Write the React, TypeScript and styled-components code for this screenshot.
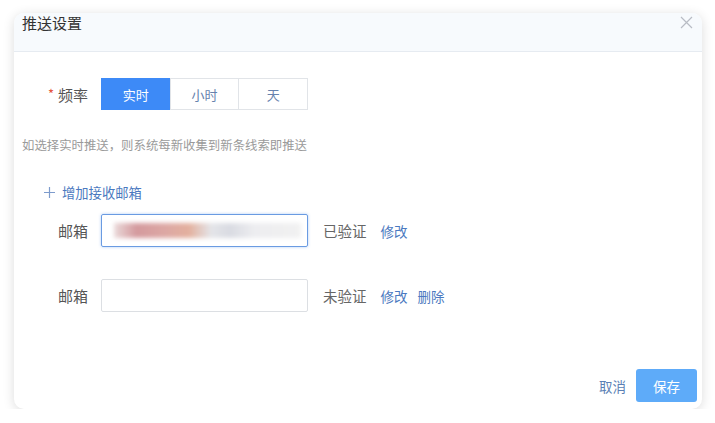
import React, { useState } from 'react';
import styled, { createGlobalStyle } from 'styled-components';

const GlobalStyle = createGlobalStyle`
    html, body {
        margin: 0;
        padding: 0;
        background: #ffffff;
        font-family: "Noto Sans CJK SC", "Noto Sans", sans-serif;
    }
`;

const Page = styled.div`
    padding: 13px 0 0 14px;
`;

const Dialog = styled.div`
    width: 688px;
    height: 396px;
    background: #ffffff;
    border-radius: 10px;
    box-shadow: 0 2px 12px rgba(0, 0, 0, 0.14);
    display: flex;
    flex-direction: column;
    overflow: hidden;
`;

const Header = styled.div`
    height: 39px;
    box-sizing: border-box;
    background: #f7fafd;
    border-bottom: 1px solid #e6ebf1;
    display: flex;
    align-items: flex-start;
    justify-content: space-between;
    padding: 0 8px 0 8px;
`;

const Title = styled.div`
    font-size: 15px;
    line-height: 20px;
    color: #333333;
`;

const CloseButton = styled.button`
    border: none;
    background: transparent;
    padding: 0;
    margin-top: 3px;
    width: 14px;
    height: 14px;
    cursor: pointer;
    display: flex;
`;

const Body = styled.div`
    flex: 1;
    padding: 26px 8px 0 8px;
    display: flex;
    flex-direction: column;
`;

const Row = styled.div<{ $top?: number }>`
    display: flex;
    align-items: center;
    margin-top: ${(p) => p.$top ?? 0}px;
`;

const Label = styled.div`
    width: 66px;
    margin-right: 13px;
    text-align: right;
    font-size: 15px;
    color: #555555;
    flex-shrink: 0;
`;

const Required = styled.span`
    color: #e5533d;
    font-size: 13px;
    margin-right: 4px;
    position: relative;
    top: -2px;
`;

const Segmented = styled.div`
    display: flex;
`;

const Segment = styled.button<{ $active?: boolean }>`
    width: 69.7px;
    height: 32px;
    box-sizing: border-box;
    border: 1px solid ${(p) => (p.$active ? '#3d8af7' : '#e1e4e8')};
    margin-left: -1px;
    background: ${(p) => (p.$active ? '#3d8af7' : '#ffffff')};
    color: ${(p) => (p.$active ? '#ffffff' : '#6682ae')};
    font-family: inherit;
    font-size: 13px;
    cursor: pointer;
    padding: 0;

    &:first-child {
        margin-left: 0;
    }
`;

const Hint = styled.div`
    margin-top: 26px;
    font-size: 12.4px;
    color: #9a9a9a;
    line-height: 18px;
`;

const AddLink = styled.button`
    margin: 29px 0 0 22px;
    align-self: flex-start;
    border: none;
    background: transparent;
    padding: 0;
    font-family: inherit;
    font-size: 13.3px;
    color: #4b79c0;
    display: flex;
    align-items: center;
    gap: 7px;
    cursor: pointer;
`;

const Input = styled.div<{ $focused?: boolean }>`
    width: 207px;
    height: 33px;
    box-sizing: border-box;
    border-radius: 2px;
    border: ${(p) => (p.$focused ? '1.5px solid #6a9be2' : '1px solid #dcdfe3')};
    box-shadow: ${(p) => (p.$focused ? '0 0 3px rgba(70, 140, 235, 0.45)' : 'none')};
    display: flex;
    align-items: center;
    padding: 0 6px 0 12px;
    flex-shrink: 0;
`;

const Redacted = styled.span`
    display: block;
    width: 188px;
    height: 15px;
    background: linear-gradient(
        90deg,
        #eadada 0%,
        #d49a9e 12%,
        #dda8a4 28%,
        #e3b09e 40%,
        #e4e5e9 52%,
        #d9dbe2 62%,
        #ededf0 75%,
        #f1f1f1 100%
    );
    filter: blur(2px);
`;

const Status = styled.span`
    margin-left: 15px;
    font-size: 14.5px;
    color: #666666;
`;

const Link = styled.button`
    border: none;
    background: transparent;
    padding: 0;
    margin-left: 14px;
    font-family: inherit;
    font-size: 13.5px;
    color: #4b79c0;
    cursor: pointer;

    & + & {
        margin-left: 10px;
    }
`;

const Footer = styled.div`
    display: flex;
    justify-content: flex-end;
    align-items: center;
    padding: 0 5px 7px 0;
    gap: 10px;
`;

const CancelButton = styled.button`
    border: none;
    background: transparent;
    padding: 0;
    font-family: inherit;
    font-size: 13.5px;
    color: #5b7fb5;
    cursor: pointer;
`;

const SaveButton = styled.button`
    width: 61px;
    height: 33px;
    border: none;
    border-radius: 3px;
    background: #5eabf9;
    color: #ffffff;
    font-family: inherit;
    font-size: 13.5px;
    cursor: pointer;
`;

const FREQUENCIES = ['实时', '小时', '天'];

interface Mailbox {
    verified: boolean;
    value: string;
}

const MAILBOXES: Mailbox[] = [
    { verified: true, value: 'redacted' },
    { verified: false, value: '' },
];

export default function App() {
    const [frequency, setFrequency] = useState('实时');

    return (
        <Page>
            <GlobalStyle />
            <Dialog>
                <Header>
                    <Title>推送设置</Title>
                    <CloseButton aria-label="关闭">
                        <svg width="13" height="13" viewBox="0 0 13 13">
                            <path d="M1 1 L12 12 M12 1 L1 12" stroke="#b8bcc4" strokeWidth="1.2" />
                        </svg>
                    </CloseButton>
                </Header>
                <Body>
                    <Row>
                        <Label>
                            <Required>*</Required>频率
                        </Label>
                        <Segmented>
                            {FREQUENCIES.map((item) => (
                                <Segment key={item} $active={item === frequency} onClick={() => setFrequency(item)}>
                                    {item}
                                </Segment>
                            ))}
                        </Segmented>
                    </Row>
                    <Hint>如选择实时推送，则系统每新收集到新条线索即推送</Hint>
                    <AddLink>
                        <svg width="11" height="11" viewBox="0 0 11 11">
                            <path d="M5.5 0 V11 M0 5.5 H11" stroke="#7d9bcc" strokeWidth="1.2" />
                        </svg>
                        增加接收邮箱
                    </AddLink>
                    {MAILBOXES.map((box, index) => (
                        <Row key={index} $top={index === 0 ? 12 : 32}>
                            <Label>邮箱</Label>
                            <Input $focused={box.verified}>{box.value && <Redacted />}</Input>
                            <Status>{box.verified ? '已验证' : '未验证'}</Status>
                            <Link>修改</Link>
                            {!box.verified && <Link>删除</Link>}
                        </Row>
                    ))}
                </Body>
                <Footer>
                    <CancelButton>取消</CancelButton>
                    <SaveButton>保存</SaveButton>
                </Footer>
            </Dialog>
        </Page>
    );
}
